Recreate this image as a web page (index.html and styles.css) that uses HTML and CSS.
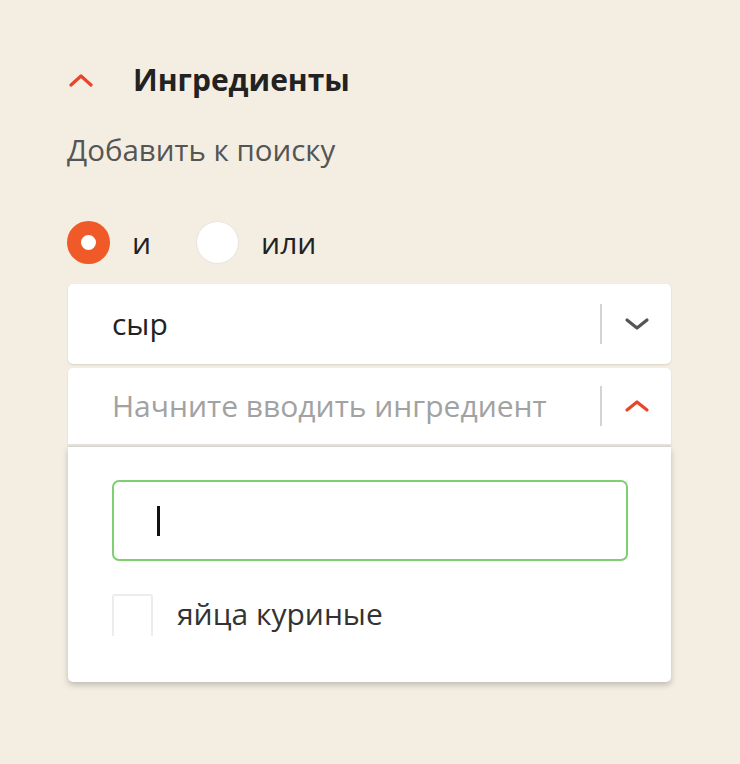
FILE: index.html
```html
<!DOCTYPE html>
<html lang="ru">
<head>
<meta charset="utf-8">
<link rel="stylesheet" href="styles.css">
</head>
<body>
<div class="panel">
  <div class="section-head">
    <svg class="head-chevron" width="26" height="14" viewBox="0 0 26 14"><path d="M3 12 L13 3 L23 12" fill="none" stroke="#e8452c" stroke-width="3.2" stroke-linecap="round" stroke-linejoin="round"/></svg>
    <h2 class="title">Ингредиенты</h2>
  </div>
  <p class="hint">Добавить к поиску</p>
  <div class="radios">
    <label class="radio checked"><span class="dot"></span><span class="radio-text">и</span></label>
    <label class="radio"><span class="dot"></span><span class="radio-text">или</span></label>
  </div>
  <div class="select">
    <span class="select-value">сыр</span>
    <span class="sep"></span>
    <svg class="arrow" width="26" height="14" viewBox="0 0 26 14"><path d="M3 3 L13 11 L23 3" fill="none" stroke="#555" stroke-width="3.2" stroke-linecap="round" stroke-linejoin="round"/></svg>
  </div>
  <div class="select open">
    <span class="select-value placeholder">Начните вводить ингредиент</span>
    <span class="sep"></span>
    <svg class="arrow" width="26" height="14" viewBox="0 0 26 14"><path d="M3 11 L13 3 L23 11" fill="none" stroke="#e8452c" stroke-width="3.2" stroke-linecap="round" stroke-linejoin="round"/></svg>
  </div>
  <div class="dropdown">
    <div class="search"><span class="caret"></span></div>
    <div class="list">
      <div class="option"><span class="box"></span><span class="option-text">яйца куриные</span></div>
    </div>
  </div>
</div>
</body>
</html>
```
FILE: styles.css
```css
* { box-sizing: border-box; }
html, body { margin: 0; padding: 0; }
body {
  background: #f4eee2;
  font-family: "Open Sans", "Noto Sans", sans-serif;
  width: 740px;
  height: 764px;
  overflow: hidden;
}
.panel {
  padding: 60px 0 0 68px;
  width: 671px;
}
.section-head {
  display: flex;
  align-items: center;
  height: 40px;
}
.head-chevron { display: block; margin-right: 39px; }
.title {
  margin: 0;
  font-size: 30px;
  font-weight: 700;
  color: #222;
  line-height: 40px;
}
.hint {
  margin: 30px 0 0 -1px;
  font-size: 29.5px;
  line-height: 40px;
  color: #555;
}
.radios {
  display: flex;
  align-items: center;
  margin-top: 50px;
  height: 44px;
}
.radio {
  display: flex;
  align-items: center;
  font-size: 30px;
  color: #222;
  margin-right: 46px;
}
.dot {
  width: 43px;
  height: 43px;
  border-radius: 50%;
  background: #fff;
  border: 1px solid #e8e4dc;
  margin-right: 22px;
  margin-left: -1px;
}
.radio.checked .dot {
  border: 14px solid #f05a28;
  background: #fff;
}
.select {
  margin-top: 20px;
  height: 80px;
  background: #fff;
  border-radius: 5px;
  box-shadow: 0 1px 2px rgba(0,0,0,0.12);
  display: flex;
  align-items: center;
  padding: 0 21px 0 44px;
}
.select.open {
  margin-top: 4px;
  height: 78px;
  border-radius: 5px 5px 0 0;
  border-bottom: 2px solid #e3e3e3;
}
.select-value {
  flex: 1;
  font-size: 30px;
  color: #222;
  padding-bottom: 2px;
}
.select-value.placeholder { color: #a2a2a2; }
.sep {
  width: 2px;
  height: 40px;
  background: #d3d3d3;
  margin-right: 22px;
}
.arrow { display: block; }
.dropdown {
  margin-top: 1px;
  background: #fff;
  border-radius: 0 0 5px 5px;
  box-shadow: 0 3px 6px rgba(0,0,0,0.22);
  padding: 33px 43px 0 44px;
  height: 235px;
}
.search {
  height: 81px;
  border: 2px solid #7dcf6f;
  border-radius: 7px;
  display: flex;
  align-items: center;
  padding-left: 43px;
}
.caret {
  width: 3px;
  height: 30px;
  background: #111;
}
.list {
  margin-top: 33px;
  height: 42px;
  overflow: hidden;
}
.option {
  display: flex;
  align-items: flex-start;
  height: 60px;
}
.box {
  width: 41px;
  height: 44px;
  border: 2px solid #ececec;
  border-radius: 3px;
  margin-right: 24px;
}
.option-text {
  font-size: 30px;
  color: #333;
  line-height: 40px;
}
```
